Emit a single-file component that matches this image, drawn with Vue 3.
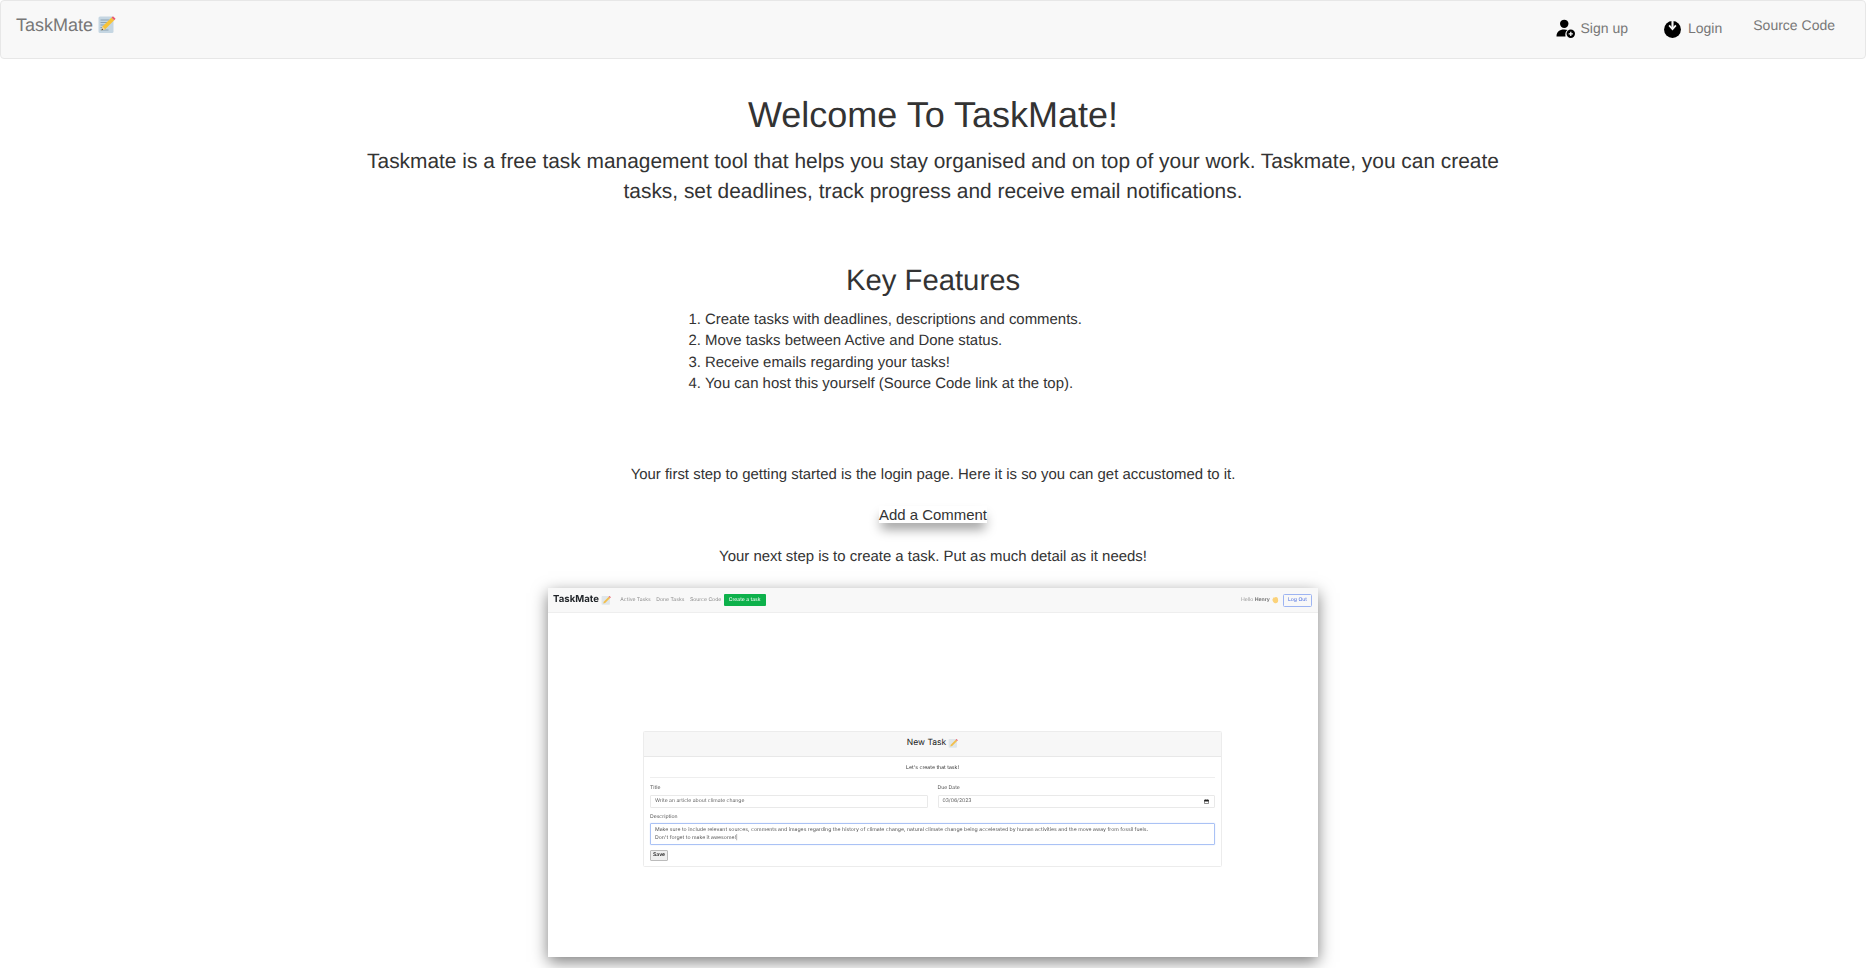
<template>
  <div class="page">
    <nav class="navbar">
      <a class="brand">
        TaskMate
        <svg class="memo" viewBox="0 0 18 18">
          <rect x="0.5" y="1.5" width="15" height="16.5" rx="1.5" fill="#c5d6e2" />
          <path d="M2.5 5h9M2.5 7.5h7M2.5 10h5M2.5 12.5h4M2.5 15h8" stroke="#7f95a6" stroke-width="0.8" />
          <path d="M4.5 11.6 13.6 2.6l2.6 2.6-9 9-3.6 1z" fill="#f7c338" />
          <path d="M4.5 11.6 7.1 14.2 3.6 15.2z" fill="#f2d6a8" />
          <path d="M3.6 15.2l.4-1.6 1.2 1.2z" fill="#333" />
          <path d="M13.6 2.6 15 1.2l2.6 2.6-1.4 1.4z" fill="#ea5a6f" />
        </svg>
      </a>
      <ul class="nav-links">
        <li>
          <a class="nav-link icon-link">
            <svg class="nav-icon" viewBox="0 0 18 18">
              <circle cx="7.8" cy="4.6" r="4" />
              <path d="M0.5 16.5c0-4.4 2.8-6.6 7.2-6.6 1.2 0 2.3.2 3.2.5-1.6 1-2.5 3.3-1.9 6.1z" />
              <circle cx="14" cy="14" r="4" />
              <path d="M12 14h4M14 12v4" stroke="#f8f8f8" stroke-width="1.2" />
            </svg>
            Sign up
          </a>
        </li>
        <li>
          <a class="nav-link icon-link">
            <svg class="nav-icon" viewBox="0 0 18 18">
              <circle cx="9" cy="10" r="8" />
              <path d="M9 0.5v8" stroke="#f8f8f8" stroke-width="2" />
              <path d="M5.8 6 9 9.6 12.2 6" fill="none" stroke="#f8f8f8" stroke-width="1.6" />
            </svg>
            Login
          </a>
        </li>
        <li><a class="nav-link source-link">Source Code</a></li>
      </ul>
    </nav>

    <main class="content">
      <h1>Welcome To TaskMate!</h1>
      <p class="lead">
        Taskmate is a free task management tool that helps you stay organised and on top of your work. Taskmate, you can create tasks, set deadlines, track progress and receive email notifications.
      </p>

      <h2>Key Features</h2>
      <ol class="features">
        <li v-for="f in features" :key="f">{{ f }}</li>
      </ol>

      <p class="step">Your first step to getting started is the login page. Here it is so you can get accustomed to it.</p>
      <button class="comment-btn">Add a Comment</button>
      <p class="step next">Your next step is to create a task. Put as much detail as it needs!</p>

      <!-- la captura de la app -->
      <div class="shot">
        <div class="shot-nav">
          <span class="shot-brand">TaskMate</span>
          <svg class="shot-memo" viewBox="0 0 18 18">
            <rect x="1" y="2" width="15" height="15.5" rx="1.5" fill="#dfe6ea" />
            <path d="M5 12 14 3l2.4 2.4-9 9-3.4 1z" fill="#f3bf4c" />
            <path d="M14 3l1.4-1.4 2.4 2.4-1.4 1.4z" fill="#ea5a6f" />
          </svg>
          <a class="shot-link first">Active Tasks</a>
          <a class="shot-link">Done Tasks</a>
          <a class="shot-link">Source Code</a>
          <span class="shot-create">Create a task</span>
          <span class="shot-hello">Hello <b>Henry</b></span>
          <svg class="shot-hand" viewBox="0 0 12 12">
            <path d="M2 5.5 4 2l1.2.6L6 1.4l1.4.5.8-.5 1.2.9.8 1.1.6 3.5C10.6 10 8.5 11.5 6 10.8 3.8 10.2 2.8 7.8 2 5.5z" fill="#fbd27a" />
          </svg>
          <span class="shot-logout">Log Out</span>
        </div>
        <div class="shot-body">
          <div class="card">
            <div class="card-header">
              New Task
              <svg class="shot-memo" viewBox="0 0 18 18">
                <rect x="1" y="2" width="15" height="15.5" rx="1.5" fill="#dfe6ea" />
                <path d="M5 12 14 3l2.4 2.4-9 9-3.4 1z" fill="#f3bf4c" />
                <path d="M14 3l1.4-1.4 2.4 2.4-1.4 1.4z" fill="#ea5a6f" />
              </svg>
            </div>
            <div class="card-body">
              <p class="card-intro">Let's create that task!</p>
              <div class="card-rule"></div>
              <div class="row">
                <div class="field">
                  <span class="label">Title</span>
                  <div class="input">Write an article about climate change</div>
                </div>
                <div class="field">
                  <span class="label">Due Date</span>
                  <div class="input">
                    03/06/2023
                    <svg class="cal" viewBox="0 0 10 10">
                      <path d="M1 2h8v7H1z" fill="none" stroke="#222" stroke-width="1" />
                      <path d="M1 2h8v2.5H1zM3 .8v1.5M7 .8v1.5" fill="#222" stroke="#222" stroke-width="0.8" />
                    </svg>
                  </div>
                </div>
              </div>
              <span class="label">Description</span>
              <div class="textarea">
                Make sure to include relevant sources, comments and images regarding the history of climate change, natural climate change being accelerated by human activities and the move away from fossil fuels.<br />Don't forget to make it awesome!|
              </div>
              <span class="save">Save</span>
            </div>
          </div>
        </div>
      </div>
    </main>
  </div>
</template>

<script setup>
const features = [
  "Create tasks with deadlines, descriptions and comments.",
  "Move tasks between Active and Done status.",
  "Receive emails regarding your tasks!",
  "You can host this yourself (Source Code link at the top).",
];
</script>

<style>
html, body {
  margin: 0;
  background: #fff;
}
</style>

<style scoped>
.page {
  padding-bottom: 11px;
  font-family: "Liberation Sans", Arial, sans-serif;
  color: #333;
  font-size: 14.95px;
  line-height: 1.43;
  text-rendering: geometricPrecision;
}

.navbar {
  display: flex;
  justify-content: space-between;
  box-sizing: border-box;
  height: 59px;
  background: #f8f8f8;
  border: 1px solid #e7e7e7;
  border-radius: 4px;
}

.brand {
  display: flex;
  align-items: flex-start;
  gap: 5px;
  padding: 14px 0 0 15px;
  font-size: 18px;
  line-height: 20px;
  color: #777;
}

.memo {
  width: 18px;
  height: 18px;
}

.nav-links {
  display: flex;
  gap: 5px;
  list-style: none;
  margin: 0 15px 0 0;
  padding: 0;
}

.nav-link {
  display: flex;
  align-items: center;
  gap: 6px;
  padding: 14px 15px;
  font-size: 14px;
  line-height: 20px;
  color: #777;
}

.source-link {
  padding-left: 11px;
}

.icon-link {
  padding-top: 17px;
  padding-bottom: 13px;
}

.nav-icon {
  width: 19px;
  height: 19px;
  fill: #000;
}

.content {
  width: 1170px;
  margin: 0 auto;
  text-align: center;
}

h1 {
  margin: 34px 0 0;
  font-size: 36px;
  font-weight: 400;
  line-height: 44px;
}

.lead {
  margin: 10px 0 0;
  font-size: 20.9px;
  font-weight: 300;
  line-height: 30px;
}

h2 {
  margin: 56px 0 0;
  font-size: 29.3px;
  font-weight: 400;
  line-height: 36px;
}

.features {
  box-sizing: border-box;
  width: 488px;
  margin: 10px auto 0;
  padding: 0 0 0 16px;
  text-align: left;
  line-height: 21.3px;
}

.step {
  margin: 70px 0 0;
  line-height: 21px;
}

.step.next {
  margin-top: 23px;
}

.comment-btn {
  display: block;
  margin: 21px auto 0;
  padding: 0;
  width: 108px;
  height: 17px;
  border: none;
  background: #fff;
  color: #333;
  font: inherit;
  line-height: 17px;
  white-space: nowrap;
  box-shadow: 0 8px 12px -2px rgba(0, 0, 0, 0.4);
}

/* captura reducida, un poco borrosa como en la imagen */
.shot {
  display: flex;
  flex-direction: column;
  box-sizing: border-box;
  width: 770px;
  height: 369px;
  margin: 21px auto 0;
  background: #fff;
  box-shadow: 0 5px 15px rgba(0, 0, 0, 0.5);
  text-align: left;
  color: #212529;
}

.shot-nav {
  display: flex;
  align-items: center;
  height: 25px;
  padding: 0 6px 0 5px;
  background: #f8f8f8;
  border-bottom: 1px solid #eee;
  box-sizing: border-box;
  filter: blur(0.4px);
}

.shot-brand {
  font-size: 9.6px;
  font-weight: 700;
  font-family: Inter, "Liberation Sans", sans-serif;
}

.shot-memo {
  width: 10px;
  height: 10px;
  margin-left: 2px;
}

.shot-link {
  font-family: Inter, "Liberation Sans", sans-serif;
  font-size: 5.1px;
  color: #8c8c8c;
  margin-left: 5.5px;
}

.shot-link.first {
  margin-left: 9.5px;
}

.shot-create {
  margin-left: 2.5px;
  padding: 0 5px;
  height: 12px;
  line-height: 12px;
  background: #0db14b;
  border-radius: 1px;
  color: #fff;
  font-family: Inter, "Liberation Sans", sans-serif;
  font-size: 5.1px;
}

.shot-hello {
  margin-left: auto;
  font-family: Inter, "Liberation Sans", sans-serif;
  font-size: 5.1px;
  color: #999;
}

.shot-hello b {
  color: #777;
}

.shot-hand {
  width: 8px;
  height: 8px;
  margin: 0 4px 0 1px;
}

.shot-logout {
  box-sizing: border-box;
  height: 13px;
  padding: 0 4px;
  line-height: 11px;
  border: 1px solid #9db4f2;
  border-radius: 1.5px;
  color: #4a6ee0;
  font-family: Inter, "Liberation Sans", sans-serif;
  font-size: 5.1px;
}

.shot-body {
  display: flex;
  justify-content: center;
  padding-top: 118px;
  filter: blur(0.4px);
  font-family: Inter, "Liberation Sans", sans-serif;
}

.card {
  box-sizing: border-box;
  width: 579px;
  height: 136px;
  margin-right: 1px;
  border: 1px solid #ececec;
  border-radius: 1.5px;
}

.card-header {
  display: flex;
  align-items: center;
  justify-content: center;
  height: 25px;
  padding-bottom: 2px;
  box-sizing: border-box;
  background: #f7f7f7;
  border-bottom: 1px solid #e8e8e8;
  font-size: 8.5px;
  color: #222;
}

.card-body {
  display: flex;
  flex-direction: column;
  padding: 7px 6px 0;
}

.card-intro {
  margin: 0;
  text-align: center;
  font-size: 5.2px;
  line-height: 8px;
  color: #333;
}

.card-rule {
  height: 1px;
  margin-top: 5px;
  background: #eee;
}

.row {
  display: flex;
  gap: 10px;
  margin-top: 6px;
}

.field {
  flex: 1;
  display: flex;
  flex-direction: column;
}

.label {
  font-size: 5.1px;
  line-height: 8px;
  color: #555;
}

.input {
  display: flex;
  align-items: center;
  justify-content: space-between;
  box-sizing: border-box;
  height: 13px;
  margin: 3px 0 5px;
  padding: 0 4px;
  border: 1px solid #e9e9e9;
  border-radius: 1px;
  font-size: 5.1px;
  color: #666;
}

.cal {
  width: 5px;
  height: 5px;
  margin-right: 1px;
}

.textarea {
  box-sizing: border-box;
  height: 22px;
  margin-top: 2px;
  padding: 3px 4px;
  border: 1px solid #aac2f5;
  border-radius: 1px;
  box-shadow: 0 0 1px #aac2f5;
  font-size: 5.2px;
  line-height: 7.5px;
  color: #555;
}

.save {
  align-self: flex-start;
  box-sizing: border-box;
  height: 11px;
  margin-top: 5px;
  padding: 0 2px;
  border: 1px solid #bbb;
  border-radius: 1px;
  background: #efefef;
  font-size: 5.1px;
  font-weight: 600;
  line-height: 9px;
  color: #222;
}
</style>
